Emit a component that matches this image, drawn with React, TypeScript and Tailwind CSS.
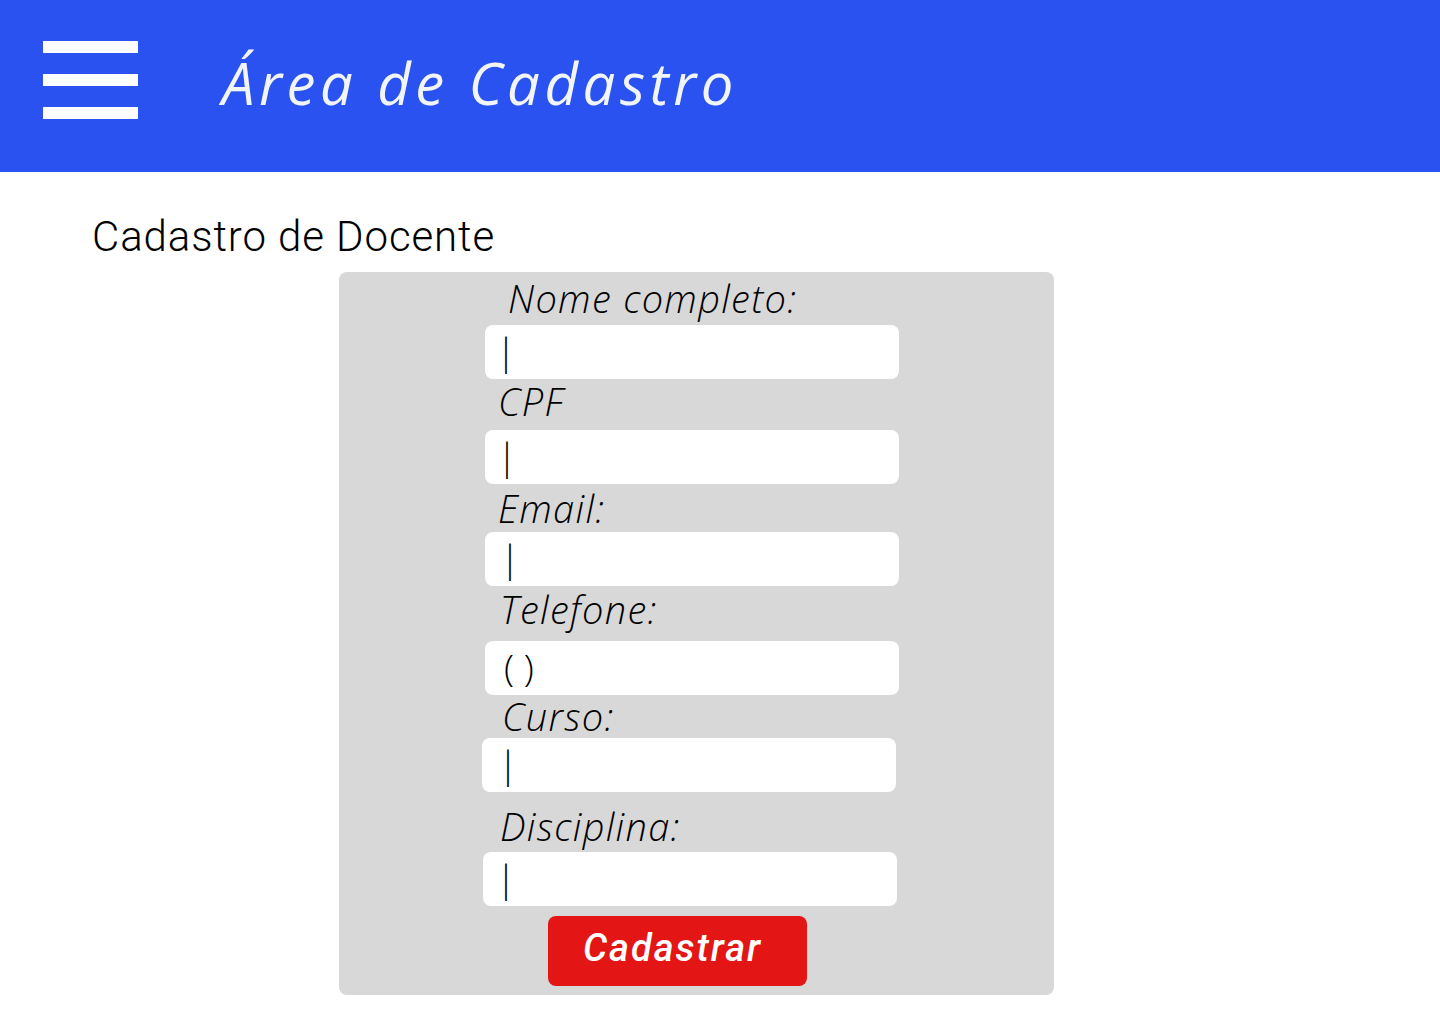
import React from "react";

const labelFont = { fontFamily: '"Open Sans", "Lato", sans-serif' };

function Field({
  label,
  h,
  pb,
  ml,
  inputMl = 0,
  pl,
  value = "|",
}: {
  label: string;
  h: string;
  pb: string;
  ml: string;
  inputMl?: number;
  pl: number;
  value?: string;
}) {
  return (
    <>
      <div className={`flex items-end ${h} ${pb}`}>
        <span
          className={`${ml} text-[38px] leading-none italic font-light text-black tracking-[1.3px]`}
        >
          {label}
        </span>
      </div>
      <div
        className="flex h-[54px] w-[414px] items-center rounded-[8px] bg-white"
        style={{ marginLeft: inputMl, paddingLeft: pl }}
      >
        <span className="-mt-[4px] text-[37px] font-light leading-none text-black">{value}</span>
      </div>
    </>
  );
}

export default function App() {
  return (
    <div className="min-h-[1024px] w-[1440px] bg-white" style={labelFont}>
      <header className="flex h-[172px] items-center bg-[#2a52f0]">
        <div className="ml-[43px] flex w-[95px] flex-col gap-[21px] self-start pt-[41px]">
          <div className="h-[12px] w-[95px] bg-white" />
          <div className="h-[12px] w-[95px] bg-white" />
          <div className="h-[12px] w-[95px] bg-white" />
        </div>
        <h1 className="ml-[84px] -mt-[6px] text-[58px] italic font-normal leading-none tracking-[4.6px] text-[#f2f5f8]">
          Área de Cadastro
        </h1>
      </header>
      <main className="pt-[44px]">
        <h2
          className="ml-[92px] h-[56px] text-[42px] font-light leading-none tracking-[0.9px] text-black"
          style={{ fontFamily: 'Roboto, "Liberation Sans", sans-serif' }}
        >
          Cadastro de Docente
        </h2>
        <section className="ml-[339px] flex h-[723px] w-[715px] flex-col rounded-[8px] bg-[#d8d8d8] pl-[146px]">
          <Field label="Nome completo:" h="h-[53px]" pb="pb-[8px]" ml="ml-[23px]" pl={11} />
          <Field label="CPF" h="h-[51px]" pb="pb-[10px]" ml="ml-[13px]" pl={12} />
          <Field label="Email:" h="h-[48px]" pb="pb-[5px]" ml="ml-[13px]" pl={15} />
          <Field label="Telefone:" h="h-[55px]" pb="pb-[13px]" ml="ml-[15px]" pl={19} value="( )" />
          <Field label="Curso:" h="h-[43px]" pb="pb-[3px]" ml="ml-[17px]" inputMl={-3} pl={16} />
          <Field label="Disciplina:" h="h-[60px]" pb="pb-[7px]" ml="ml-[15px]" inputMl={-2} pl={13} />
          <button
            className="ml-[63px] mt-[10px] flex h-[70px] w-[259px] items-center justify-center rounded-[8px] bg-[#e31515] pb-[6px] pr-[10px] text-[38px] font-medium italic leading-none tracking-[2px] text-white"
            style={{ fontFamily: 'Roboto, "Open Sans", sans-serif' }}
          >
            Cadastrar
          </button>
        </section>
      </main>
    </div>
  );
}
